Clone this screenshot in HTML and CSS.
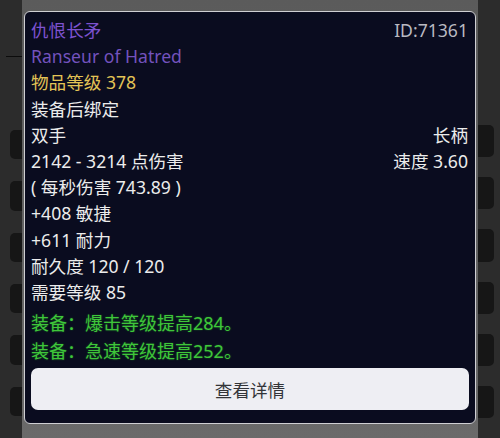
FILE: index.html
```html
<!DOCTYPE html>
<html lang="zh-CN">
<head>
<meta charset="utf-8">
<title>Item tooltip</title>
<link rel="stylesheet" href="styles.css">
</head>
<body>
<div class="scene">
  <div class="side side-left">
    <div class="rule"></div>
    <div class="card"></div>
    <div class="card"></div>
    <div class="card"></div>
    <div class="card"></div>
    <div class="card"></div>
    <div class="card"></div>
  </div>
  <div class="center"></div>
  <div class="side side-right">
    <div class="card"></div>
    <div class="card"></div>
    <div class="card"></div>
    <div class="card"></div>
    <div class="card"></div>
    <div class="card"></div>
  </div>

  <div class="tooltip">
    <div class="line row">
      <span class="epic">仇恨长矛</span>
      <span class="id">ID:71361</span>
    </div>
    <div class="line epic-en">Ranseur of Hatred</div>
    <div class="line ilvl">物品等级 378</div>
    <div class="line">装备后绑定</div>
    <div class="line row"><span>双手</span><span>长柄</span></div>
    <div class="line row"><span>2142 - 3214 点伤害</span><span>速度 3.60</span></div>
    <div class="line">( 每秒伤害 743.89 )</div>
    <div class="line">+408 敏捷</div>
    <div class="line">+611 耐力</div>
    <div class="line">耐久度 120 / 120</div>
    <div class="line">需要等级 85</div>
    <div class="equip">
      <div class="gline">装备：爆击等级提高284。</div>
      <div class="gline">装备：急速等级提高252。</div>
    </div>
    <div class="btn">查看详情</div>
  </div>
</div>
</body>
</html>
```

FILE: styles.css
```css
html, body {
  margin: 0;
  padding: 0;
}
body {
  width: 500px;
  height: 438px;
  overflow: hidden;
  background: #2c2c2c;
  font-family: "Noto Sans", "Noto Sans CJK SC", sans-serif;
}
.scene {
  position: relative;
  width: 500px;
  height: 438px;
  display: flex;
}
.side {
  width: 22px;
  flex: none;
  background: #2c2c2c;
  display: flex;
  flex-direction: column;
}
.side-left {
  padding-top: 56px;
  align-items: flex-end;
}
.side-right {
  padding-top: 125px;
  align-items: flex-start;
}
.rule {
  width: 16px;
  height: 1px;
  background: #0c0c0c;
  margin-bottom: 73px;
}
.card {
  width: 14px;
  height: 38px;
  background: #161616;
  margin-bottom: 22px;
}
.side-left .card {
  border-radius: 5px 0 0 5px;
  width: 12px;
}
.side-right .card {
  border-radius: 0 5px 5px 0;
  width: 16px;
  height: 40px;
  margin-bottom: 20px;
}
.center {
  flex: 1;
  background: linear-gradient(#5b5b5b, #636363 60%, #6a6a6a);
}
.tooltip {
  position: absolute;
  left: 24px;
  top: 11px;
  width: 452px;
  height: 413px;
  box-sizing: border-box;
  border: 1.5px solid #cfcfd3;
  border-radius: 6px;
  background: #0a0c1f;
  padding: 5px 7px 0 6px;
  display: flex;
  flex-direction: column;
  color: #ececec;
  font-size: 17.6px;
}
.line {
  line-height: 26.2px;
  height: 26.2px;
  white-space: nowrap;
}
.row {
  display: flex;
  justify-content: space-between;
}
.epic {
  color: #7d52cf;
}
.epic-en {
  color: #7352bd;
}
.id {
  color: #b9b9c1;
}
.ilvl {
  color: #e3c456;
}
.equip {
  margin-top: 4px;
  color: #3fc63a;
  font-size: 18px;
  text-shadow: 0 0 2px rgba(40, 190, 40, 0.45);
}
.gline {
  line-height: 28px;
  height: 28px;
  white-space: nowrap;
}
.btn {
  margin: 3px -1px 0 0;
  height: 42px;
  border-radius: 7px;
  background: #eeeef3;
  color: #333438;
  display: flex;
  align-items: center;
  justify-content: center;
  font-size: 17.6px;
}
```
